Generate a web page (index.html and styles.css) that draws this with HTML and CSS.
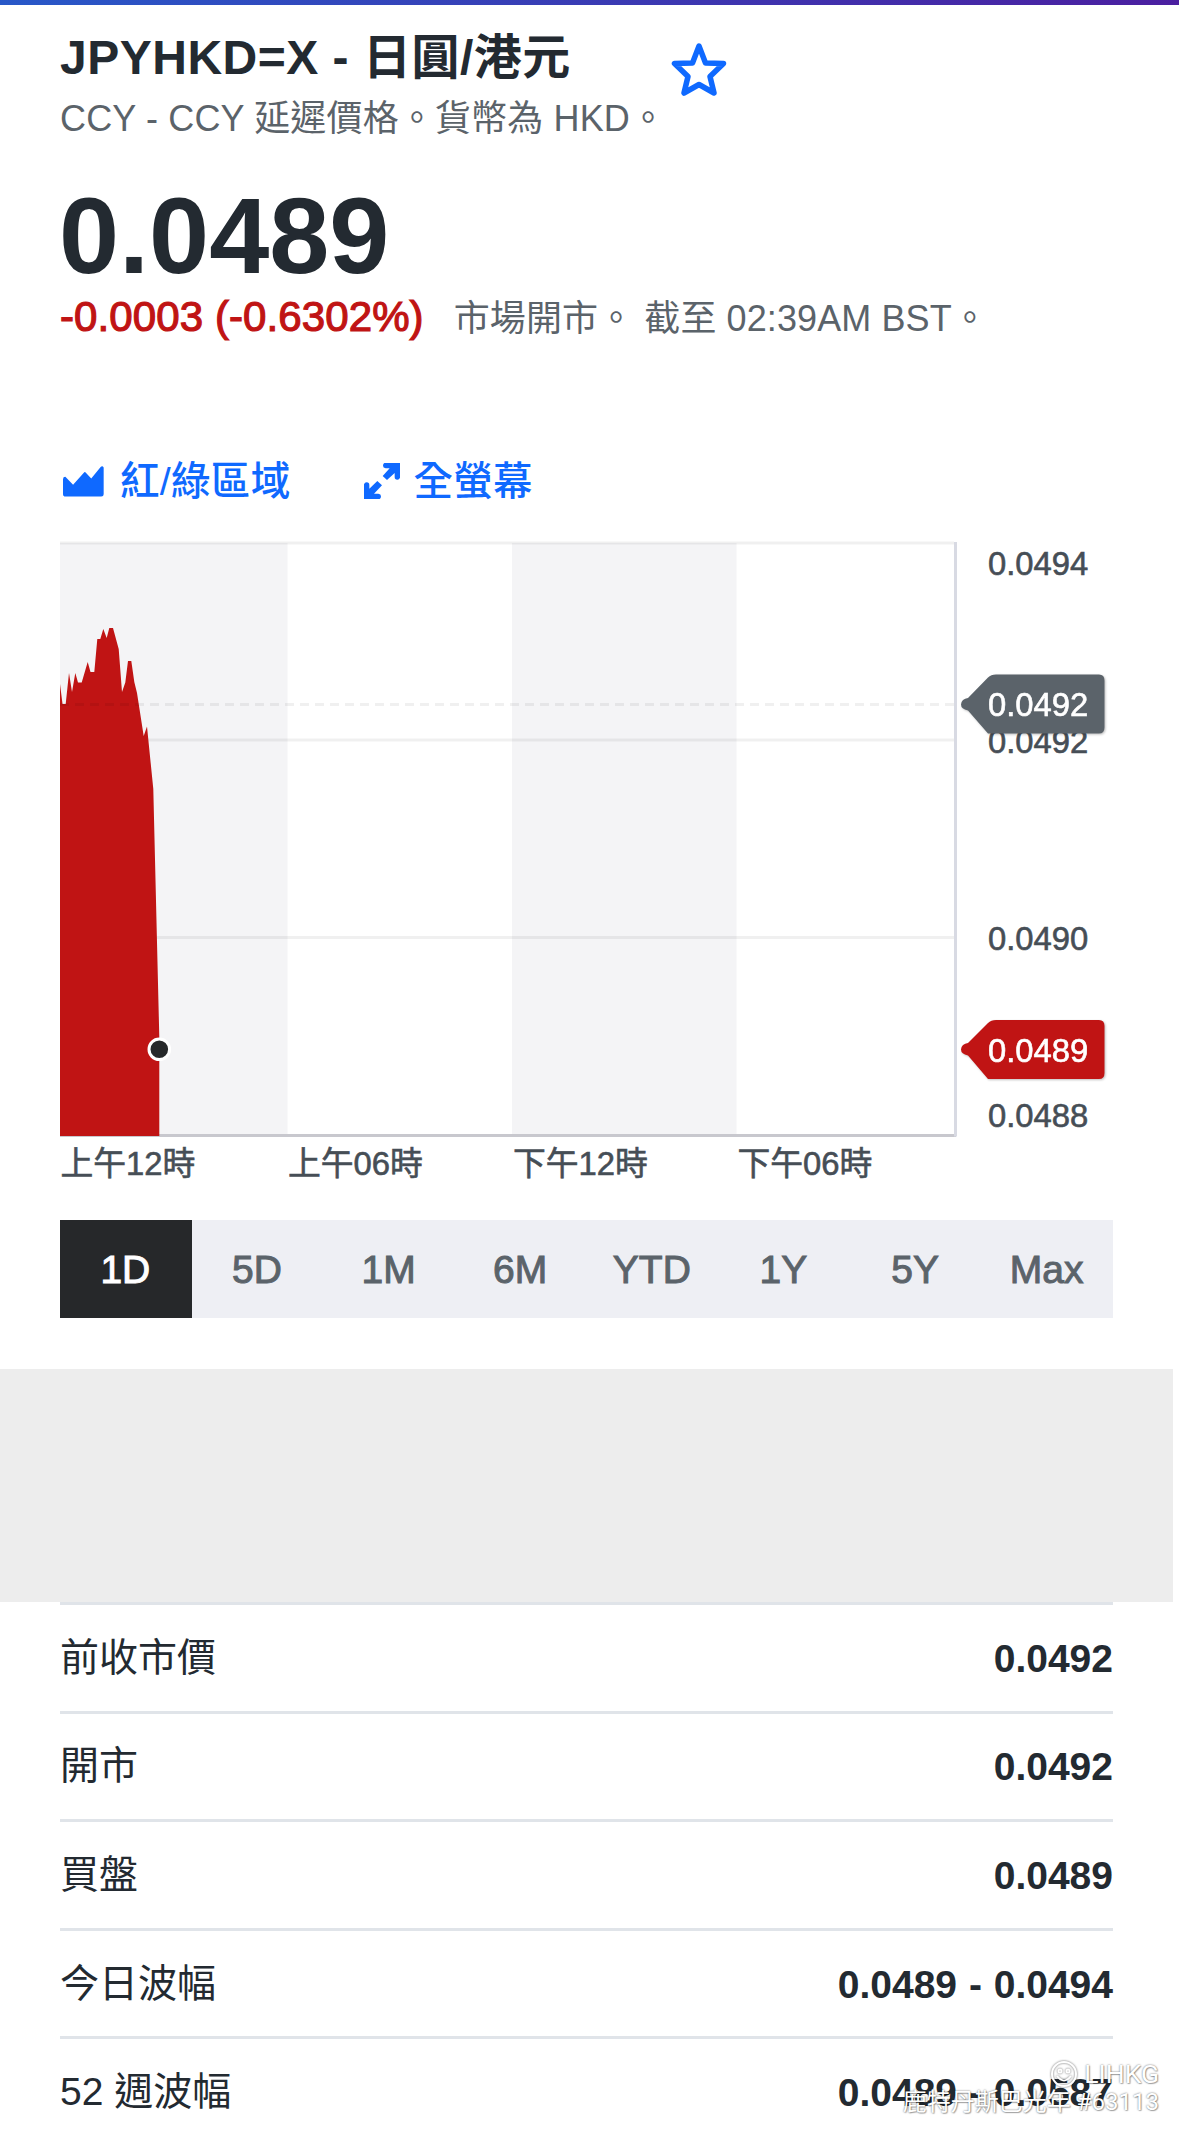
FILE: index.html
```html
<!DOCTYPE html>
<html lang="zh-Hant-HK">
<head>
    <meta charset="UTF-8">
    <meta name="viewport" content="width=device-width, initial-scale=1.0">
    <title>JPYHKD=X - 日圓/港元</title>
    <link rel="stylesheet" href="styles.css">
</head>
<body>
    <div class="top-bar"></div>

    <main class="quote">
        <header class="quote-header">
            <div>
                <h1 class="quote-title">JPYHKD=X - 日圓/港元</h1>
                <p class="quote-exchange">CCY - CCY 延遲價格。貨幣為 HKD。</p>
            </div>
            <svg class="star" viewBox="0 0 56 56" width="56" height="56">
                <path d="M28 5 L34.500 22 L52.500 22.500 L39 35.500 L43 52 L28 43.500 L13 52 L17 35.500 L3.500 22.500 L21.500 22 Z"/>
            </svg>
        </header>

        <div class="price">0.0489</div>
        <div class="price-info">
            <span class="change">-0.0003 (-0.6302%)</span>
            <span class="market">市場開市。 截至 02:39AM BST。</span>
        </div>

        <div class="tools">
            <a class="tool tool-area">
                <svg viewBox="70 76 122 92" width="41" height="31">
                    <path d="M70 115 Q70 108 77 108 L100 132 L132 96 Q135 92 138 96 L154 113 L182 79 Q187 74 191 80 V160 Q191 167 184 167 H78 Q70 167 70 159 Z"/>
                </svg>
                <span>紅/綠區域</span>
            </a>
            <a class="tool tool-full">
                <svg viewBox="972 66 108 108" width="36" height="36">
                    <path d="M1033 66 H1080 V110 Q1078 116 1072 116 Q1064 116 1064 108 V96 L1041 117 L1028 105 L1049 82 H1037 Q1029 81 1029 74 Q1029 68 1033 66 Z"/>
                    <path d="M1019 174 H972 V130 Q974 124 980 124 Q988 124 988 132 V143 L1012 120 L1026 133 L1002 158 H1015 Q1023 159 1023 166 Q1023 172 1019 174 Z"/>
                </svg>
                <span>全螢幕</span>
            </a>
        </div>

        <svg class="chart" viewBox="60 540 1060 650" width="1060" height="650">
            <rect class="band" x="60" y="543" width="227.500" height="592"/>
            <rect class="band" x="512" y="543" width="224.500" height="592"/>

            <path class="grid" d="M60 543 H954"/>
            <path class="grid" d="M60 740 H954 M60 937.500 H954"/>
            <path class="axis-x" d="M60 1135.500 H956"/>
            <path class="axis-y" d="M955.500 542 V1136.500"/>

            <path class="area" d="M60 1136 V684 L62.500 704 H65.700 L69 673 L72 692 L75.300 673 L78 682.500 H81.700 L87.700 662 L90.500 672 H94.300 L97.300 639 H100.300 L103.300 629 L106.700 638 L109.300 628 H113 L118.700 649 L122 692 L125.300 682.500 L128 661 H131.300 L134.300 682 L137 693 L143.700 736 L147 726.500 L153.300 789 L159.300 1037 V1136 Z"/>
            <path class="grid previous" d="M60 704.500 H954"/>
            <circle class="last-point" cx="159.300" cy="1049.300" r="10.300"/>

            <g class="labels">
                <text x="988" y="575">0.0494</text>
                <text x="988" y="752.500">0.0492</text>
                <text x="988" y="950">0.0490</text>
                <text x="988" y="1127">0.0488</text>
                <text x="60.500" y="1175">上午12時</text>
                <text x="288" y="1175">上午06時</text>
                <text x="513" y="1175">下午12時</text>
                <text x="737.500" y="1175">下午06時</text>
            </g>

            <g class="tag tag-previous">
                <path d="M963 700 Q965 698.500 968 698 L988 677.500 Q991 674.500 996 674.500 H1099 Q1104.500 674.500 1104.500 680.500 V727.500 Q1104.500 733.500 1099 733.500 H988 L968 710.500 Q961 709 961 704.500 Q961 702 963 700 Z"/>
                <text x="988" y="716">0.0492</text>
            </g>
            <g class="tag tag-last">
                <path d="M963 1045 Q965 1043.500 968 1043 L988 1023 Q991 1020 996 1020 H1099 Q1104.500 1020 1104.500 1026 V1073 Q1104.500 1079 1099 1079 H988 L968 1055.500 Q961 1054 961 1049.500 Q961 1047 963 1045 Z"/>
                <text x="988" y="1061.500">0.0489</text>
            </g>
        </svg>

        <nav class="ranges">
            <a class="range active">1D</a>
            <a class="range">5D</a>
            <a class="range">1M</a>
            <a class="range">6M</a>
            <a class="range">YTD</a>
            <a class="range">1Y</a>
            <a class="range">5Y</a>
            <a class="range">Max</a>
        </nav>
    </main>

    <div class="ad-slot"></div>

    <section class="summary">
        <div class="row"><span>前收市價</span><strong>0.0492</strong></div>
        <div class="row"><span>開市</span><strong>0.0492</strong></div>
        <div class="row"><span>買盤</span><strong>0.0489</strong></div>
        <div class="row"><span>今日波幅</span><strong>0.0489 - 0.0494</strong></div>
        <div class="row"><span>52 週波幅</span><strong>0.0489 - 0.0587</strong></div>
    </section>

    <div class="watermark">
        <div class="watermark-brand">
            <svg viewBox="0 0 28 28" width="28" height="28">
                <circle cx="14" cy="14" r="12"/>
                <circle cx="10" cy="11" r="1.500"/>
                <circle cx="18" cy="11" r="1.500"/>
                <path d="M7 16 Q14 25 21 16"/>
            </svg>
            <span>LIHKG</span>
        </div>
        <div class="watermark-user">鹿特丹斯巴光年 #63113</div>
    </div>
</body>
</html>
```
FILE: styles.css
```css
* {
    box-sizing: border-box;
}
body {
    position: relative;
    height: 2130px;
    margin: 0;
    overflow: hidden;
    background: #fff;
    color: #232a31;
    font-family: "Liberation Sans", "Noto Sans CJK TC", sans-serif;
}
.top-bar {
    height: 5px;
    background: linear-gradient(to right, #2858c8, #4b1fa0);
}
.quote {
    padding: 23px 60px 0;
}
.quote-header {
    display: flex;
    align-items: flex-start;
}
.quote-title {
    margin: 0;
    font-size: 48px;
    line-height: 59px;
    font-weight: bold;
    letter-spacing: 0.5px;
    white-space: nowrap;
}
.quote-exchange {
    margin: 0;
    color: #5b636a;
    font-size: 36px;
    line-height: 63px;
    letter-spacing: 0.15px;
    white-space: nowrap;
}
.star {
    margin: 13px 0 0 5px;
    fill: none;
    stroke: #0f69ff;
    stroke-width: 5.5;
    stroke-linejoin: round;
}
.price {
    margin-top: 26px;
    font-size: 108px;
    line-height: 120px;
    font-weight: bold;
    text-indent: -1px;
}
.price-info {
    display: flex;
    align-items: baseline;
    gap: 30px;
    height: 38px;
    line-height: 42px;
    white-space: nowrap;
}
.change {
    color: #c01414;
    font-size: 42px;
    letter-spacing: 0.1px;
    -webkit-text-stroke: 1.2px #c01414;
}
.market {
    color: #5b636a;
    font-size: 36px;
    letter-spacing: 0.1px;
}
.tools {
    display: flex;
    gap: 74px;
    height: 44px;
    margin-top: 125px;
    padding-left: 3px;
}
.tool {
    display: flex;
    align-items: center;
    gap: 16px;
    color: #0f69ff;
    font-size: 39.5px;
    line-height: 44px;
    font-weight: 500;
    letter-spacing: 0.3px;
}
.tool-full {
    gap: 13px;
}
.tool svg {
    fill: #0f69ff;
}
.chart {
    display: block;
    margin-top: 37px;
}
.band {
    fill: #f4f4f6;
}
.area {
    fill: #c01414;
}
.grid {
    fill: none;
    stroke: #000;
    stroke-opacity: 0.06;
    stroke-width: 3;
}
.previous {
    stroke-dasharray: 9 6;
}
.axis-x {
    stroke: #c8c8ce;
    stroke-width: 3;
}
.axis-y {
    stroke: #d8dae3;
    stroke-width: 3;
}
.last-point {
    fill: #26282a;
    stroke: #fff;
    stroke-width: 3;
}
.labels text,
.tag text {
    fill: #464e56;
    stroke: #464e56;
    stroke-width: 0.6;
    font-size: 32.8px;
}
.tag {
    filter: drop-shadow(1px 1px 1px rgba(0, 0, 0, 0.25));
}
.tag text {
    fill: #fff;
    stroke: #fff;
}
.tag-previous {
    fill: #5b636a;
}
.tag-last {
    fill: #c01414;
}
.ranges {
    display: flex;
    width: 1053px;
    height: 98px;
    margin-top: 30px;
    background: #eeeff4;
}
.range {
    flex: 1 1 0;
    padding-right: 1px;
    color: #5b636a;
    font-size: 39px;
    line-height: 99px;
    text-align: center;
    -webkit-text-stroke: 1px currentColor;
}
.active {
    background: #26282a;
    color: #fff;
}
.ad-slot {
    width: 1173px;
    height: 233px;
    margin-top: 51px;
    background: #ededed;
}
.summary {
    width: 1053px;
    margin-left: 60px;
}
.row {
    display: flex;
    align-items: center;
    justify-content: space-between;
    height: 108.6px;
    border-top: 3px solid #e0e4e9;
    font-size: 39px;
    line-height: 46px;
}
.row strong {
    padding-top: 2px;
    font-weight: bold;
    word-spacing: 1px;
}
/* sits over the last row */
.watermark {
    position: absolute;
    right: 20px;
    bottom: 13px;
    color: #fff;
    text-align: right;
    text-shadow: 0 0 2px rgba(0, 0, 0, 0.6), 1px 1px 1px rgba(0, 0, 0, 0.25);
    font-family: Roboto, "Noto Sans CJK TC", sans-serif;
    font-size: 24px;
    line-height: 29px;
}
.watermark-brand {
    display: flex;
    align-items: center;
    justify-content: flex-end;
    gap: 6px;
    font-size: 26.5px;
}
.watermark-brand svg {
    fill: none;
    stroke: #fff;
    stroke-width: 2;
    filter: drop-shadow(0 0 1px rgba(0, 0, 0, 0.6));
}
```
